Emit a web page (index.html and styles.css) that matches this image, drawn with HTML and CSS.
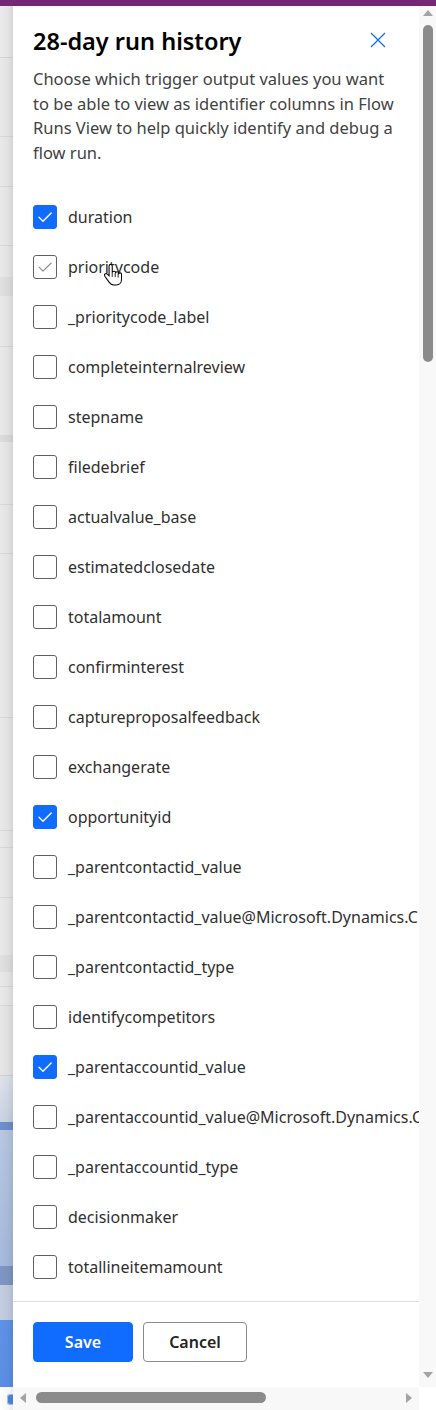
FILE: index.html
```html
<!DOCTYPE html>
<html lang="en">
<head>
<meta charset="utf-8">
<title>28-day run history</title>
<link rel="stylesheet" href="styles.css">
</head>
<body>
<div class="page">
  <div class="topbar"></div>
  <div class="backdrop">
    <span class="backdrop-icon"></span>
  </div>
  <section class="panel">
    <div class="panel-body">
      <header class="panel-header">
        <h1 class="title">28-day run history</h1>
        <button class="close" aria-label="Close">
          <svg width="16" height="16" viewBox="0 0 16 16"><path d="M1 1L15 15M15 1L1 15" stroke="#0f6cff" stroke-width="1.3" fill="none"/></svg>
        </button>
      </header>
      <p class="desc">Choose which trigger output values you want to be able to view as identifier columns in Flow Runs View to help quickly identify and debug a flow run.</p>
      <ul class="options">
        <li class="option"><span class="box checked"><svg viewBox="0 0 24 24"><path d="M6 12.2l4 4L18.2 8" /></svg></span><span class="label">duration</span></li>
        <li class="option hover"><span class="box hovered"><svg viewBox="0 0 24 24"><path d="M6 12.2l4 4L18.2 8" /></svg></span><span class="label">prioritycode</span>
          <svg class="cursor" width="19" height="27" viewBox="0 0 18 24"><path d="M6.3 1.5c-.9 0-1.5.7-1.5 1.5v9.2L3.2 10.7c-.7-.7-1.8-.7-2.4 0-.5.6-.5 1.4 0 2l4 5.6c1 1.5 2.6 2.7 4.6 2.7h2.2c3 0 5-2.3 5-5.1v-5c0-.8-.6-1.4-1.4-1.4s-1.4.6-1.4 1.4V9.9c0-.8-.6-1.4-1.4-1.4s-1.4.6-1.4 1.4V9.4c0-.8-.6-1.4-1.4-1.4S7.8 8.6 7.8 9.4V3c0-.8-.6-1.5-1.5-1.5z" fill="#fff" stroke="#000" stroke-width="1"/><path d="M10.6 9.6v4M13.4 10v4M7.8 9.4v4" stroke="#000" stroke-width=".8" fill="none"/></svg>
        </li>
        <li class="option"><span class="box"></span><span class="label">_prioritycode_label</span></li>
        <li class="option"><span class="box"></span><span class="label">completeinternalreview</span></li>
        <li class="option"><span class="box"></span><span class="label">stepname</span></li>
        <li class="option"><span class="box"></span><span class="label">filedebrief</span></li>
        <li class="option"><span class="box"></span><span class="label">actualvalue_base</span></li>
        <li class="option"><span class="box"></span><span class="label">estimatedclosedate</span></li>
        <li class="option"><span class="box"></span><span class="label">totalamount</span></li>
        <li class="option"><span class="box"></span><span class="label">confirminterest</span></li>
        <li class="option"><span class="box"></span><span class="label">captureproposalfeedback</span></li>
        <li class="option"><span class="box"></span><span class="label">exchangerate</span></li>
        <li class="option"><span class="box checked"><svg viewBox="0 0 24 24"><path d="M6 12.2l4 4L18.2 8" /></svg></span><span class="label">opportunityid</span></li>
        <li class="option"><span class="box"></span><span class="label">_parentcontactid_value</span></li>
        <li class="option"><span class="box"></span><span class="label">_parentcontactid_value@Microsoft.Dynamics.CRM.lookuplogicalname</span></li>
        <li class="option"><span class="box"></span><span class="label">_parentcontactid_type</span></li>
        <li class="option"><span class="box"></span><span class="label">identifycompetitors</span></li>
        <li class="option"><span class="box checked"><svg viewBox="0 0 24 24"><path d="M6 12.2l4 4L18.2 8" /></svg></span><span class="label">_parentaccountid_value</span></li>
        <li class="option"><span class="box"></span><span class="label">_parentaccountid_value@Microsoft.Dynamics.CRM.lookuplogicalname</span></li>
        <li class="option"><span class="box"></span><span class="label">_parentaccountid_type</span></li>
        <li class="option"><span class="box"></span><span class="label">decisionmaker</span></li>
        <li class="option"><span class="box"></span><span class="label">totallineitemamount</span></li>
      </ul>
    </div>
    <footer class="panel-footer">
      <button class="btn primary">Save</button>
      <button class="btn secondary">Cancel</button>
    </footer>
  </section>
  <div class="vscroll">
    <span class="arrow up"></span>
    <span class="vthumb"></span>
    <span class="arrow down"></span>
  </div>
  <div class="hscroll">
    <span class="arrow left"></span>
    <span class="hthumb"></span>
    <span class="arrow right"></span>
  </div>
  <div class="corner"></div>
</div>
</body>
</html>
```

FILE: styles.css
```css
* { box-sizing: border-box; }
html, body { margin: 0; padding: 0; }
body {
  width: 436px;
  height: 1410px;
  overflow: hidden;
  background: #fff;
  font-family: "Segoe UI", "Noto Sans", "Open Sans", sans-serif;
  color: #242424;
}
.page {
  display: grid;
  grid-template-columns: 13px 406px 17px;
  grid-template-rows: 6px 1381px 23px;
  width: 436px;
  height: 1410px;
}
.topbar {
  grid-column: 1 / -1;
  grid-row: 1;
  background: #742774;
}
.backdrop {
  grid-column: 1;
  grid-row: 2 / 4;
  position: relative;
  background:
    linear-gradient(to right, rgba(0,0,0,0) 0%, rgba(0,0,0,0.03) 60%, rgba(0,0,0,0.09) 100%),
    linear-gradient(to bottom,
      #ebebeb 0px, #ebebeb 51px, #d6d6d6 51px, #d6d6d6 52px,
      #e9e9e9 52px, #e9e9e9 130px, #d8d8d8 130px, #d8d8d8 131px,
      #e9e9e9 131px, #e9e9e9 180px, #d8d8d8 180px, #d8d8d8 181px,
      #e9e9e9 181px, #e9e9e9 239px, #d8d8d8 239px, #d8d8d8 240px,
      #e9e9e9 240px, #e9e9e9 271px, #e0e0e0 271px, #e0e0e0 290px,
      #e9e9e9 290px, #e9e9e9 340px, #d8d8d8 340px, #d8d8d8 341px,
      #e9e9e9 341px, #e9e9e9 429px, #dcdcdc 429px, #dcdcdc 436px,
      #e9e9e9 436px, #e9e9e9 498px, #d8d8d8 498px, #d8d8d8 499px,
      #e9e9e9 499px, #e9e9e9 547px, #d8d8d8 547px, #d8d8d8 548px,
      #e9e9e9 548px, #e9e9e9 711px, #d8d8d8 711px, #d8d8d8 712px,
      #e9e9e9 712px, #e9e9e9 824px, #d8d8d8 824px, #d8d8d8 825px,
      #e9e9e9 825px, #e9e9e9 841px, #d8d8d8 841px, #d8d8d8 842px,
      #e9e9e9 842px, #e9e9e9 891px, #d8d8d8 891px, #d8d8d8 892px,
      #e9e9e9 892px, #e9e9e9 949px, #e0e0e0 949px, #e0e0e0 966px,
      #e9e9e9 966px, #e9e9e9 980px, #d8d8d8 980px, #d8d8d8 981px,
      #e9e9e9 981px, #e9e9e9 999px, #d8d8d8 999px, #d8d8d8 1000px,
      #e6e6e6 1000px, #e6e6e6 1069px, #d2d2d2 1069px, #d2d2d2 1070px,
      #dfe3ea 1070px, #c9d3e4 1116px, #6f8fcc 1116px, #6f8fcc 1124px,
      #b8c7e2 1124px, #a6badd 1260px, #7f96c4 1260px, #7f96c4 1279px,
      #c3cde0 1279px, #c3cde0 1314px, #5f93e8 1314px, #5b8fe6 1381px,
      #ffffff 1381px, #ffffff 1404px);
}
.backdrop-icon {
  position: absolute;
  left: 7px;
  bottom: 5px;
  width: 6px;
  height: 11px;
  border-radius: 3px 0 0 3px;
  background: #4a7fd8;
  border: 1px solid #9fbbe8;
  border-right: none;
}
.panel {
  grid-column: 2;
  grid-row: 2;
  background: #fff;
  display: flex;
  flex-direction: column;
  overflow: hidden;
}
.panel-body {
  flex: 1;
  overflow: hidden;
  padding: 20px 20px 0 20px;
}
.panel-header {
  display: flex;
  align-items: flex-start;
  justify-content: space-between;
}
.title {
  margin: 0;
  font-size: 23.5px;
  line-height: 30px;
  font-weight: 600;
  color: #000;
}
.close {
  border: none;
  background: none;
  padding: 0;
  margin: 6px 13px 0 0;
  width: 16px;
  height: 16px;
  display: flex;
}
.desc {
  margin: 11px 0 0 0;
  font-size: 16.5px;
  line-height: 24.67px;
  color: #424242;
  width: 367px;
}
.options {
  list-style: none;
  margin: 26px 0 0 0;
  padding: 0;
}
.option {
  position: relative;
  height: 50px;
  display: flex;
  align-items: center;
  gap: 11px;
  white-space: nowrap;
}
.box {
  flex: none;
  width: 24px;
  height: 24px;
  border: 1px solid #616161;
  border-radius: 3px;
  background: #fff;
  display: flex;
  align-items: center;
  justify-content: center;
}
.box svg {
  width: 24px;
  height: 24px;
  flex: none;
}
.box path {
  fill: none;
  stroke-width: 1.4;
  stroke-linecap: round;
  stroke-linejoin: round;
}
.box.checked {
  background: #0f6cff;
  border-color: #0f6cff;
}
.box.checked path { stroke: #fff; }
.box.hovered path { stroke: #8a8a8a; stroke-width: 1.1; }
.label {
  font-size: 16px;
  line-height: 22px;
  color: #303030;
}
.cursor {
  position: absolute;
  left: 71px;
  top: 20px;
}
.panel-footer {
  flex: none;
  border-top: 1px solid #e0e0e0;
  padding: 20px 20px 25px 20px;
  display: flex;
  gap: 10px;
}
.btn {
  height: 40px;
  border-radius: 4px;
  font-family: inherit;
  font-size: 16px;
  font-weight: 600;
  padding: 0;
}
.btn.primary {
  width: 100px;
  background: #0f6cff;
  border: 1px solid #0f6cff;
  color: #fff;
}
.btn.secondary {
  width: 104px;
  background: #fff;
  border: 1px solid #8a8a8a;
  color: #242424;
}
.vscroll {
  grid-column: 3;
  grid-row: 2;
  background: #f8f8f8;
  display: flex;
  flex-direction: column;
  align-items: center;
  padding: 4px 0 9px 0;
}
.vthumb {
  width: 10px;
  height: 337px;
  margin-top: 9px;
  border-radius: 5px;
  background: #8b8b8b;
}
.arrow { width: 0; height: 0; display: block; }
.arrow.up {
  border-left: 5.5px solid transparent;
  border-right: 5.5px solid transparent;
  border-bottom: 6px solid #a3a3a3;
}
.arrow.down {
  margin-top: auto;
  border-left: 5.5px solid transparent;
  border-right: 5.5px solid transparent;
  border-top: 6px solid #a3a3a3;
}
.hscroll {
  grid-column: 2;
  grid-row: 3;
  background: #f8f8f8;
  display: flex;
  align-items: center;
  padding: 0 7px 2px 7px;
}
.arrow.left {
  border-top: 5.5px solid transparent;
  border-bottom: 5.5px solid transparent;
  border-right: 6px solid #a3a3a3;
}
.hthumb {
  width: 230px;
  height: 11px;
  margin-left: 10px;
  border-radius: 5.5px;
  background: #8b8b8b;
}
.arrow.right {
  margin-left: auto;
  border-top: 5.5px solid transparent;
  border-bottom: 5.5px solid transparent;
  border-left: 6px solid #a3a3a3;
}
.corner {
  grid-column: 3;
  grid-row: 3;
  background: #fff;
}
```
